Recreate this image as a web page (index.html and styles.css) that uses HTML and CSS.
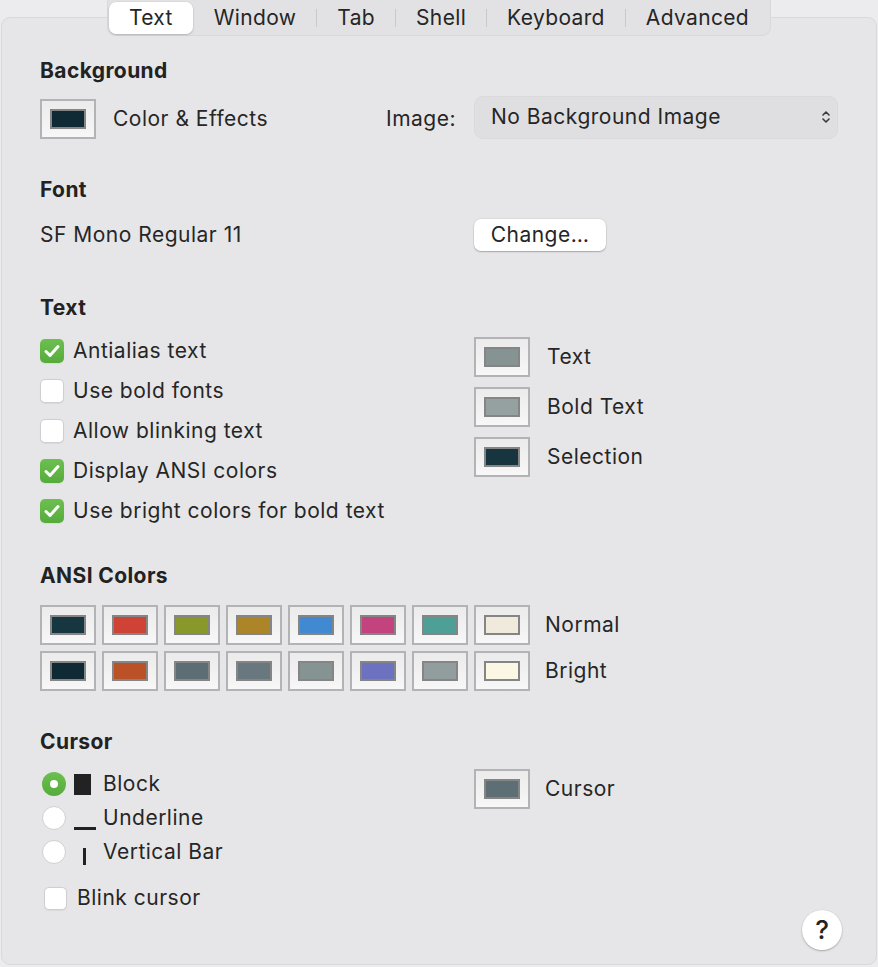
FILE: index.html
```html
<!DOCTYPE html>
<html lang="en">
<head>
<meta charset="utf-8">
<title>Profile – Text</title>
<link rel="stylesheet" href="styles.css">
</head>
<body>
<div class="window">
  <nav class="tabs">
    <span class="tab active">Text</span>
    <span class="tab">Window</span>
    <span class="sep"></span>
    <span class="tab">Tab</span>
    <span class="sep"></span>
    <span class="tab">Shell</span>
    <span class="sep"></span>
    <span class="tab">Keyboard</span>
    <span class="sep"></span>
    <span class="tab">Advanced</span>
  </nav>

  <main class="panel">
    <h2 class="heading">Background</h2>
    <div class="grid2 bg-row">
      <div class="cell-left">
        <span class="well"><span class="swatch c-bg"></span></span>
        <span class="well-label">Color &amp; Effects</span>
        <span class="image-label">Image:</span>
      </div>
      <div class="popup">
        <span>No Background Image</span>
        <svg class="chev" width="10" height="16" viewBox="0 0 10 16"><path d="M2 6 L5 3 L8 6 M2 10 L5 13 L8 10" fill="none" stroke="#3a3a3a" stroke-width="1.6" stroke-linecap="round" stroke-linejoin="round"/></svg>
      </div>
    </div>

    <h2 class="heading h-font">Font</h2>
    <div class="grid2 font-row">
      <div class="cell-left"><span>SF Mono Regular 11</span></div>
      <div><button class="btn">Change…</button></div>
    </div>

    <h2 class="heading h-text">Text</h2>
    <div class="grid2 text-grid">
      <div class="checks">
        <label class="check-row"><span class="cb on"><svg width="24" height="24" viewBox="0 0 24 24"><path d="M6 12.5 L10 16.5 L18 7.5" fill="none" stroke="#fff" stroke-width="3" stroke-linecap="round" stroke-linejoin="round"/></svg></span>Antialias text</label>
        <label class="check-row"><span class="cb"></span>Use bold fonts</label>
        <label class="check-row"><span class="cb"></span>Allow blinking text</label>
        <label class="check-row"><span class="cb on"><svg width="24" height="24" viewBox="0 0 24 24"><path d="M6 12.5 L10 16.5 L18 7.5" fill="none" stroke="#fff" stroke-width="3" stroke-linecap="round" stroke-linejoin="round"/></svg></span>Display ANSI colors</label>
        <label class="check-row"><span class="cb on"><svg width="24" height="24" viewBox="0 0 24 24"><path d="M6 12.5 L10 16.5 L18 7.5" fill="none" stroke="#fff" stroke-width="3" stroke-linecap="round" stroke-linejoin="round"/></svg></span>Use bright colors for bold text</label>
      </div>
      <div class="wells">
        <div class="well-row"><span class="well"><span class="swatch c-text"></span></span><span class="wl">Text</span></div>
        <div class="well-row"><span class="well"><span class="swatch c-bold"></span></span><span class="wl">Bold Text</span></div>
        <div class="well-row"><span class="well"><span class="swatch c-sel"></span></span><span class="wl">Selection</span></div>
      </div>
    </div>

    <h2 class="heading h-ansi">ANSI Colors</h2>
    <div class="ansi">
      <span class="well"><span class="swatch n0"></span></span>
      <span class="well"><span class="swatch n1"></span></span>
      <span class="well"><span class="swatch n2"></span></span>
      <span class="well"><span class="swatch n3"></span></span>
      <span class="well"><span class="swatch n4"></span></span>
      <span class="well"><span class="swatch n5"></span></span>
      <span class="well"><span class="swatch n6"></span></span>
      <span class="well"><span class="swatch n7"></span></span>
      <span class="ansi-label">Normal</span>
      <span class="well"><span class="swatch b0"></span></span>
      <span class="well"><span class="swatch b1"></span></span>
      <span class="well"><span class="swatch b2"></span></span>
      <span class="well"><span class="swatch b3"></span></span>
      <span class="well"><span class="swatch b4"></span></span>
      <span class="well"><span class="swatch b5"></span></span>
      <span class="well"><span class="swatch b6"></span></span>
      <span class="well"><span class="swatch b7"></span></span>
      <span class="ansi-label">Bright</span>
    </div>

    <h2 class="heading h-cursor">Cursor</h2>
    <div class="grid2 cursor-grid">
      <div class="radios">
        <label class="radio-row"><span class="radio on"></span><span class="ic"><span class="ic-block"></span></span><span class="rl">Block</span></label>
        <label class="radio-row"><span class="radio"></span><span class="ic"><span class="ic-under"></span></span><span class="rl">Underline</span></label>
        <label class="radio-row"><span class="radio"></span><span class="ic"><span class="ic-bar"></span></span><span class="rl">Vertical Bar</span></label>
        <label class="check-row blink"><span class="cb"></span>Blink cursor</label>
      </div>
      <div class="wells cursor-well">
        <div class="well-row"><span class="well"><span class="swatch c-cur"></span></span><span class="wl wl2">Cursor</span></div>
      </div>
    </div>

    <div class="footer"><button class="help">?</button></div>
  </main>
</div>
</body>
</html>
```

FILE: styles.css
```css
* { box-sizing: border-box; }

html, body {
  margin: 0;
  padding: 0;
  background: #ececee;
}

body {
  font-family: Inter, "Noto Sans", "Liberation Sans", sans-serif;
  font-size: 21px;
  letter-spacing: 0.5px;
  line-height: 24px;
  color: #262626;
}

.window {
  width: 878px;
  height: 967px;
}

/* segmented control */
.tabs {
  position: relative;
  z-index: 1;
  display: flex;
  align-items: center;
  width: fit-content;
  height: 36px;
  margin: 0 auto;
  padding: 0 1px;
  background: #e2e2e4;
  border: 1px solid #d8d8da;
  border-top-color: #e2e2e4;
  border-radius: 0 0 9px 9px;
  left: 0;
  letter-spacing: 0.35px;
}

.tab {
  padding: 0 20px;
  height: 32px;
  line-height: 32px;
  color: #262626;
}

.tab.active {
  background: #fff;
  border-radius: 7px;
  box-shadow: 0 1px 2px rgba(0,0,0,0.18), 0 0 0 0.5px rgba(0,0,0,0.06);
  padding: 0 20px;
}

.tab.active + .tab { padding-left: 21px; }

.sep {
  width: 1px;
  height: 18px;
  background: #c9c9cb;
}

/* panel */
.panel {
  margin: -19px 1px 0 1px;
  height: 948px;
  background: #e6e6e8;
  border: 1px solid #d9d9db;
  border-radius: 9px;
  padding: 41px 34px 0 38px;
}

.heading {
  margin: 0;
  font-size: 21px;
  letter-spacing: 0.4px;
  line-height: 24px;
  font-weight: 700;
  color: #222;
}

.h-font { margin-top: 39px; }
.h-text { margin-top: 45px; }
.h-ansi { margin-top: 33px; }
.h-cursor { margin-top: 39px; }

.grid2 {
  display: grid;
  grid-template-columns: 434px 1fr;
}

.cell-left {
  display: flex;
  align-items: center;
}

.bg-row { margin-top: 16px; height: 40px; align-items: center; }

.well-label { margin-left: 17px; }

.image-label {
  margin-left: auto;
  margin-right: 18px;
}

.popup {
  display: flex;
  align-items: center;
  justify-content: space-between;
  width: 364px;
  height: 43px;
  margin-top: -4px;
  padding: 0 6px 0 16px;
  background: #dfdfe1;
  border: 1px solid #dadadc;
  border-radius: 9px;
  color: #262626;
}

.font-row { margin-top: 17px; height: 32px; align-items: center; }

.btn {
  font: inherit;
  letter-spacing: inherit;
  color: #262626;
  width: 132px;
  height: 32px;
  background: #fff;
  border: none;
  border-radius: 7px;
  box-shadow: 0 1px 1.5px rgba(0,0,0,0.25), 0 0 0 0.5px rgba(0,0,0,0.08);
  padding: 0;
}

/* color wells */
.well {
  display: inline-flex;
  align-items: center;
  justify-content: center;
  flex: none;
  width: 56px;
  height: 40px;
  border: 2px solid #b3b3b5;
  background: linear-gradient(#ebebeb, #f7f7f7);
}

.swatch {
  display: block;
  width: 36px;
  height: 20px;
  border: 2px solid #858585;
}

.c-bg { background: #0f2a34; }
.c-text { background: #869393; }
.c-bold { background: #95a1a1; }
.c-sel { background: #16353f; }
.c-cur { background: #5d6e75; }

.n0 { background: #163640; }
.n1 { background: #cf4236; }
.n2 { background: #88982a; }
.n3 { background: #ad8529; }
.n4 { background: #4189d1; }
.n5 { background: #c3437e; }
.n6 { background: #4e9f95; }
.n7 { background: #efeadb; }
.b0 { background: #0f2a35; }
.b1 { background: #bb5127; }
.b2 { background: #5c6d74; }
.b3 { background: #69777f; }
.b4 { background: #869393; }
.b5 { background: #6c71c0; }
.b6 { background: #929e9d; }
.b7 { background: #fcf6e5; }

/* text section */
.text-grid { margin-top: 11px; }

.checks { display: flex; flex-direction: column; }

.check-row {
  display: flex;
  align-items: center;
  height: 40px;
}

.cb {
  display: inline-flex;
  align-items: center;
  justify-content: center;
  flex: none;
  width: 24px;
  height: 24px;
  margin-right: 9px;
  border-radius: 5px;
  background: #fff;
  border: 1px solid #cfcfd1;
  box-shadow: 0 0.5px 1px rgba(0,0,0,0.06);
}

.cb.on {
  border: none;
  background: linear-gradient(#6cc04f, #55ab3c);
}

.wells {
  display: flex;
  flex-direction: column;
  gap: 10px;
  padding-top: 6px;
}

.well-row {
  display: flex;
  align-items: center;
  height: 40px;
}

.wl { margin-left: 17px; }
.wl2 { margin-left: 15px; }

/* ansi */
.ansi {
  margin-top: 17px;
  display: grid;
  grid-template-columns: repeat(8, 56px) auto;
  grid-auto-rows: 40px;
  column-gap: 6px;
  row-gap: 6px;
  align-items: center;
}

.ansi-label { margin-left: 9px; }

/* cursor */
.cursor-grid { margin-top: 13px; }

.radios { display: flex; flex-direction: column; }

.radio-row {
  display: flex;
  align-items: center;
  height: 34px;
}

.radio {
  flex: none;
  width: 24px;
  height: 24px;
  margin-left: 2px;
  border-radius: 50%;
  background: #fff;
  border: 1px solid #cfcfd1;
  display: inline-flex;
  align-items: center;
  justify-content: center;
}

.radio.on {
  border: none;
  background: linear-gradient(#6cc04f, #55ab3c);
}

.radio.on::after {
  content: "";
  width: 8px;
  height: 8px;
  border-radius: 50%;
  background: #fff;
}

.ic {
  position: relative;
  flex: none;
  width: 22px;
  height: 24px;
  margin-left: 8px;
  margin-right: 7px;
}

.ic-block {
  position: absolute;
  left: 0;
  top: 2px;
  width: 17px;
  height: 21px;
  background: #222;
}

.ic-under {
  position: absolute;
  left: 0;
  top: 21px;
  width: 22px;
  height: 3px;
  background: #222;
}

.ic-bar {
  position: absolute;
  left: 9px;
  top: 8px;
  width: 3px;
  height: 17px;
  background: #222;
}

.check-row.blink {
  height: 24px;
  margin-top: 17px;
  padding-left: 4px;
}

.check-row.blink .cb {
  width: 23px;
  height: 23px;
  margin-right: 10px;
}

.cursor-well { padding-top: 2px; }

.footer {
  display: flex;
  justify-content: flex-end;
}

.help {
  width: 40px;
  height: 40px;
  border-radius: 50%;
  border: none;
  background: #fff;
  box-shadow: 0 1px 2px rgba(0,0,0,0.25), 0 0 0 0.5px rgba(0,0,0,0.06);
  font-family: Inter, "Noto Sans", sans-serif;
  font-size: 26px;
  font-weight: 500;
  color: #222;
  padding: 0;
  line-height: 40px;
}
```
